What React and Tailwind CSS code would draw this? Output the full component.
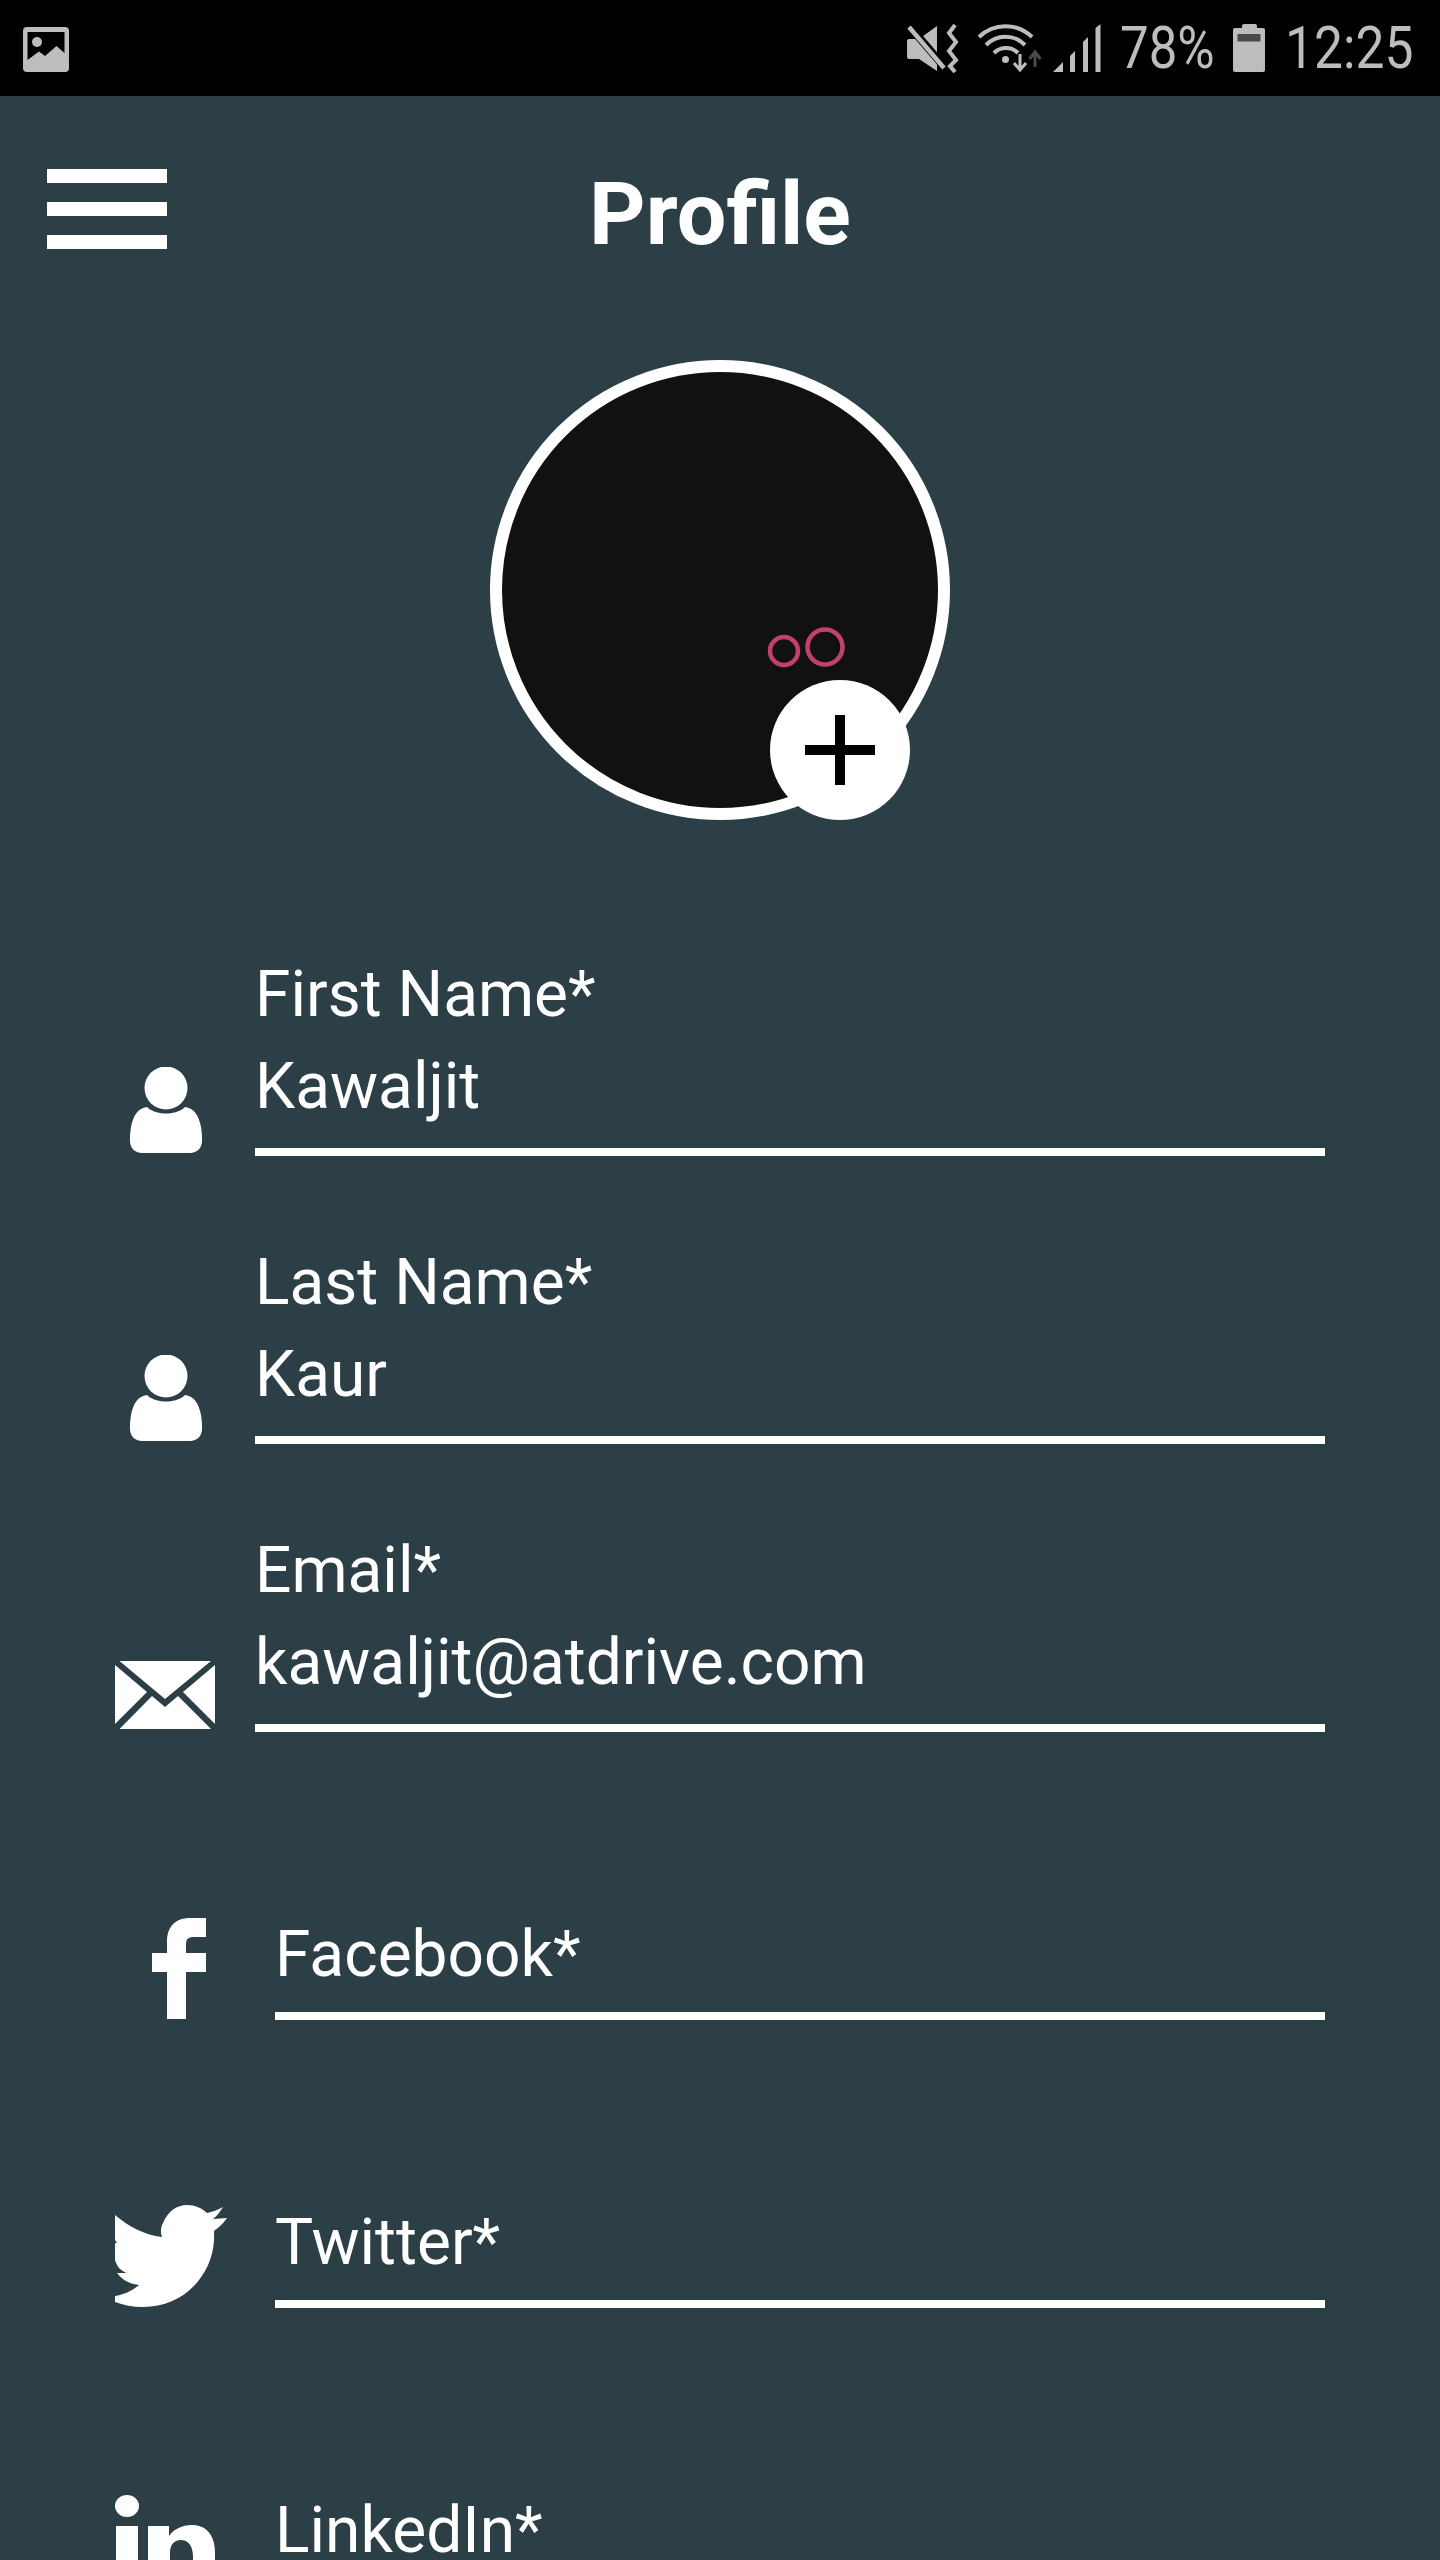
import React from 'react';

function ImageIcon() {
    return (
        <svg width="46" height="45" viewBox="0 0 46 45" className="ml-[23px] mt-[2px]">
            <rect width="46" height="45" rx="4" fill="#bdbdbd" />
            <path d="M4.5 5H41.5V26L33.5 19L22 29L16 24.5L4.5 33Z" fill="#000" />
            <circle cx="14" cy="15" r="5" fill="#bdbdbd" />
        </svg>
    );
}

function MuteIcon() {
    return (
        <svg width="52" height="49" viewBox="0 0 52 49">
            <path d="M2 15H12L30 2V47L12 35H2Q0 35 0 33V17Q0 15 2 15Z" fill="#bdbdbd" />
            <path d="M-2 -3L40 46" stroke="#000" strokeWidth="8" />
            <path d="M2 3L37 44" stroke="#bdbdbd" strokeWidth="4.500" />
            <path d="M48 1L42 9L49 18L42 27L49 36L43 42L48 48" fill="none" stroke="#bdbdbd" strokeWidth="4" />
        </svg>
    );
}

function WifiIcon() {
    return (
        <svg width="68" height="49" viewBox="0 0 68 49" fill="none" stroke="#bdbdbd" strokeWidth="4">
            <path d="M2 13A38 38 0 0 1 55 13" />
            <path d="M9 21A27 27 0 0 1 48 21" />
            <path d="M17 29A17 17 0 0 1 41 29" />
            <circle cx="28.5" cy="35.5" r="3.5" fill="#bdbdbd" stroke="none" />
            <path d="M43 30V45M37 39L43 46L49 39" strokeWidth="3" />
            <path d="M58 43V29M52.500 35L58 28L63.500 35" stroke="#4a4a4a" strokeWidth="3" />
        </svg>
    );
}

function SignalIcon() {
    return (
        <svg width="48" height="48" viewBox="0 0 48 48" fill="#bdbdbd">
            <path d="M0 48L10 38V48Z" />
            <path d="M17 32L22 27V48H17Z" />
            <path d="M30 18L35 13V48H30Z" />
            <path d="M42.500 4L47.500 0V48H42.500Z" />
        </svg>
    );
}

function BatteryIcon() {
    return (
        <svg width="32" height="48" viewBox="0 0 32 48">
            <path d="M9 4V2Q9 0 11 0H22Q24 0 24 2V4H30Q32 4 32 6V46Q32 48 30 48H2Q0 48 0 46V6Q0 4 2 4Z" fill="#bdbdbd" />
            <rect x="4.500" y="10" width="23" height="7.500" fill="#4a4a4a" />
        </svg>
    );
}

function PersonIcon() {
    return (
        <svg width="72" height="86" viewBox="0 0 72 86" fill="#fff" className="ml-[15px] mb-[3px]">
            <circle cx="36" cy="21" r="21.500" />
            <path d="M17 40C21 44 28 46.500 36 46.500C44 46.500 51 44 55 40C64 41 69 49 71 60C72 66 72 70 72 74C72 81 67 86 60 86H12C5 86 0 81 0 74C0 70 0 66 1 60C3 49 8 41 17 40Z" />
        </svg>
    );
}

function MailIcon() {
    return (
        <svg width="100" height="68" viewBox="0 0 100 68" fill="#fff" className="mb-[3px]">
            <path d="M4.500 0H96L50 38Z" />
            <path d="M0 4L32 31L0 63Z" />
            <path d="M100 4L68 31L100 63Z" />
            <path d="M4.500 68L37 35L50 46L63 35L96 68Z" />
        </svg>
    );
}

function FacebookIcon() {
    return (
        <svg width="54" height="101" viewBox="0 0 54 101" fill="#fff" className="ml-[37px] mb-[1px]">
            <path d="M54 0V19H42C36 19 34 21 34 27V35H54V54H34V101H15V54H0V35H15V24C15 8 24 0 38 0Z" />
        </svg>
    );
}

function TwitterIcon() {
    return (
        <svg width="112" height="102" viewBox="0 0 112 102" fill="#fff" className="mb-[1px]">
            <path d="M0 10C14 22 30 30 47 32C45 26 46 22 48 18C53 6 62 0 72 0C80 0 87 3 92 8C97 7 103 5 108 2C105 7 102 11 98 14C103 14 108 13 112 13C108 19 104 22 99 26C100 42 96 60 84 75C72 91 52 102 28 102C18 102 8 100 0 97V91C8 90 17 86 24 80C12 79 5 72 2 68H12C6 66 2 62 0 55V38L2 38L0 35Z" />
        </svg>
    );
}

function LinkedinIcon() {
    return (
        <svg width="100" height="96" viewBox="0 0 100 96" fill="#fff" className="mb-[5px]">
            <ellipse cx="12" cy="11" rx="12" ry="11" />
            <rect x="1" y="31" width="22" height="65" />
            <path d="M33 31H54V41C59 34 67 30 77 30C92 30 100 41 100 58V96H78V62C78 52 74 45 66 45C59 45 55 50 55 58V96H33Z" />
        </svg>
    );
}

function Field({ icon, label, value, social }) {
    return (
        <div className="flex items-end h-[288px]">
            <div className={social ? 'w-[160px] shrink-0' : 'w-[140px] shrink-0'}>{icon}</div>
            <div className={`flex-1 border-b-[8px] border-white text-[64px] leading-[92px] text-white ${social ? 'pb-[11px]' : 'pb-[15px]'}`}>
                <div>{label}</div>
                {value && <div>{value}</div>}
            </div>
        </div>
    );
}

export default function App() {
    return (
        <div className="w-[1440px] h-[2560px] overflow-hidden bg-[#2c3e46] font-[Roboto,sans-serif]">
            {/* status bar */}
            <div className="flex items-center justify-between h-[96px] bg-black">
                <ImageIcon />
                <div className="flex items-center pr-[28px] text-[#bdbdbd]">
                    <MuteIcon />
                    <div className="ml-[18px]"><WifiIcon /></div>
                    <div className="ml-[8px]"><SignalIcon /></div>
                    <div className="w-[95px] ml-[19px] text-[60px] leading-[60px] whitespace-nowrap origin-left scale-x-[.85]">78%</div>
                    <div className="ml-[18px]"><BatteryIcon /></div>
                    <div className="w-[127px] ml-[20px] text-[60px] leading-[60px] whitespace-nowrap origin-left scale-x-[.86]">12:25</div>
                </div>
            </div>

            {/* header */}
            <div className="grid grid-cols-3 items-center h-[226px]">
                <div className="flex flex-col gap-[19px] pl-[47px]">
                    <span className="block w-[120px] h-[14px] bg-white" />
                    <span className="block w-[120px] h-[14px] bg-white" />
                    <span className="block w-[120px] h-[14px] bg-white" />
                </div>
                <h1 className="text-center text-[88px] leading-none font-bold text-white pt-[10px]">Profile</h1>
            </div>

            {/* avatar */}
            <div className="flex justify-center mt-[38px]">
                <div className="relative w-[460px] h-[460px] rounded-full border-[12px] border-white bg-[#111111]">
                    <svg width="436" height="436" viewBox="0 0 436 436" fill="none" stroke="#c2416b" strokeWidth="4.500">
                        <circle cx="282" cy="279" r="14" />
                        <circle cx="323" cy="275" r="17.500" />
                    </svg>
                    <div className="absolute left-[268px] top-[308px] flex items-center justify-center w-[140px] h-[140px] rounded-full bg-white">
                        <svg width="70" height="70" viewBox="0 0 70 70" fill="#000">
                            <rect x="30" width="10" height="70" />
                            <rect y="30" width="70" height="10" />
                        </svg>
                    </div>
                </div>
            </div>

            {/* form */}
            <div className="mt-[48px] pl-[115px] pr-[115px]">
                <Field icon={<PersonIcon />} label="First Name*" value="Kawaljit" />
                <Field icon={<PersonIcon />} label="Last Name*" value="Kaur" />
                <Field icon={<MailIcon />} label="Email*" value="kawaljit@atdrive.com" />
                <Field social icon={<FacebookIcon />} label="Facebook*" />
                <Field social icon={<TwitterIcon />} label="Twitter*" />
                <Field social icon={<LinkedinIcon />} label="LinkedIn*" />
            </div>
        </div>
    );
}
